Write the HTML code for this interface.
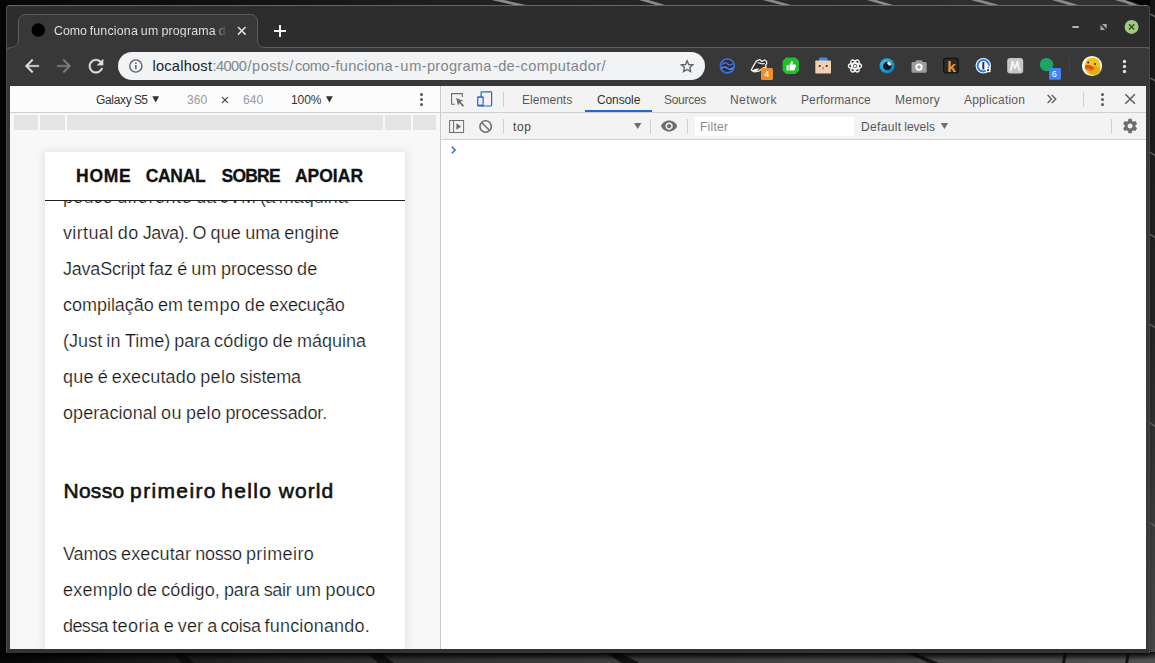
<!DOCTYPE html>
<html lang="pt-BR">
<head>
<meta charset="utf-8">
<title>Como funciona um programa de computador</title>
<style>
*{box-sizing:border-box;margin:0;padding:0}
html,body{width:1155px;height:663px;overflow:hidden}
body{position:relative;background:#060606;font-family:"Liberation Sans",sans-serif;-webkit-font-smoothing:antialiased}
.abs{position:absolute}
.t{position:absolute;white-space:nowrap;line-height:1}
/* desktop wallpaper */
#wall{left:0;top:0;width:1155px;height:663px}
/* window */
#win{left:6px;top:5px;width:1144px;height:648px;background:#393939;border-radius:4px 4px 0 0;box-shadow:0 4px 5px -1px rgba(0,0,0,.55)}
#winborder{left:6px;top:5px;width:1144px;height:648px;border:1px solid #474747;border-top-color:#676767;border-left-color:#4b4b4b;border-bottom-color:#333;border-radius:4px 4px 0 0}
#titlebar{left:7px;top:6px;width:1142px;height:42px;background:#2d2d2d;border-radius:3px 3px 0 0}
#toolbar{left:10px;top:48px;width:1136px;height:38px;background:#383838}
#content{left:10px;top:86px;width:1136px;height:563px;background:#fff;overflow:hidden}
#omni{left:118px;top:52px;width:587px;height:28px;border-radius:14px;background:#f1f3f4}
/* device side */
#devbg{left:0;top:0;width:430px;height:563px;background:#f8f8f8}
#devbar{left:0;top:0;width:430px;height:27px;background:#fcfcfc;border-bottom:1px solid #cfcfcf}
.mq{position:absolute;top:28.500px;height:15.800px;background:#e4e4e4}
#phone{left:35px;top:66px;width:360px;height:497px;background:#fff;box-shadow:0 0 9px 1px rgba(0,0,0,.10);overflow:hidden}
#nav{left:0;top:0;width:360px;height:49px;background:#fff;border-bottom:1px solid #222}
.nv{font-weight:bold;font-size:17.5px;color:#111;top:15.500px;-webkit-text-stroke:.3px #111}
.p{font-size:18px;color:#141414;left:18px;-webkit-text-stroke:.24px #fff}
.h{font-size:21px;font-weight:normal;color:#111;-webkit-text-stroke:.6px #111}
.h .t,.nv .t{top:0}
/* devtools side */
#dt{left:430px;top:0;width:706px;height:563px;background:#fff;border-left:1px solid #cbcbcb}
#dttabs{left:0;top:0;width:705px;height:27px;background:#f3f3f3;border-bottom:1px solid #cfcfcf}
#dtbar{left:0;top:27px;width:705px;height:27px;background:#f3f3f3;border-bottom:1px solid #cfcfcf}
.tab{font-size:12px;color:#5a5a5a;top:8px}
.sep{position:absolute;width:1px;background:#cfcfcf}
#url .t{top:0}
#url .t:first-child{color:#202124}
</style>
</head>
<body>
<svg id="wall" class="abs" viewBox="0 0 1155 663">
  <defs>
    <linearGradient id="gtop" x1="0" x2="1" y1="0" y2="0"><stop offset="0" stop-color="#060606"/><stop offset=".2" stop-color="#111"/><stop offset=".4" stop-color="#202020"/><stop offset=".75" stop-color="#2b2b2b"/><stop offset="1" stop-color="#333"/></linearGradient>
    <linearGradient id="gbot" x1="0" x2="1" y1="0" y2="0"><stop offset="0" stop-color="#060606"/><stop offset=".13" stop-color="#1a1a1a"/><stop offset=".26" stop-color="#2b2b2b"/><stop offset=".52" stop-color="#3d3d3d"/><stop offset=".78" stop-color="#484848"/><stop offset="1" stop-color="#525252"/></linearGradient>
    <linearGradient id="gsh" x1="0" x2="0" y1="0" y2="1"><stop offset="0" stop-color="#000" stop-opacity=".8"/><stop offset="1" stop-color="#000" stop-opacity="0"/></linearGradient>
    <linearGradient id="grt" x1="0" x2="0" y1="0" y2="1"><stop offset="0" stop-color="#161616"/><stop offset=".5" stop-color="#262626"/><stop offset="1" stop-color="#4a4a4a"/></linearGradient>
  </defs>
  <rect width="1155" height="663" fill="#050505"/>
  <rect x="0" y="0" width="1155" height="6" fill="url(#gtop)"/>
  <g stroke="#8a8a8a" stroke-width="2.800" fill="none">
    <path d="M493 -1 l36 8"/><path d="M640 -1 l24 7"/><path d="M764 -1 l26 7"/><path d="M868 -1 l24 7"/><path d="M972 -1 l26 7"/><path d="M1053 -1 l24 7"/><path d="M1116 -1 q22 5 42 20"/>
  </g>
  <path d="M1122 -1 q22 5 36 16 V-1z" fill="#050505"/>
  <rect x="1150" y="0" width="5" height="663" fill="url(#grt)"/>
  <g stroke="#5d5d5d" stroke-width="1.600" fill="none">
    <path d="M1146 12 l10 5"/><path d="M1146 76 l10 5"/><path d="M1146 150 l10 6"/><path d="M1146 232 l10 6"/><path d="M1146 322 l10 6"/><path d="M1146 420 l10 7"/><path d="M1146 520 l10 7"/>
  </g>
  <rect x="0" y="652" width="1155" height="11" fill="url(#gbot)"/>
  <g fill="#0c0c0c" opacity=".85">
    <path d="M172 652 l10 0 l12 11 l-12 0z"/><path d="M366 652 l14 0 l14 11 l-16 0z"/><path d="M604 652 l14 0 l22 11 l-18 0z"/><path d="M905 652 l8 0 l26 11 l-10 0z"/>
    <path d="M1064 652 h3 l-2 11 h-3z"/><path d="M1127 652 h3 l-2 11 h-3z"/>
  </g>
  <rect x="0" y="652" width="1155" height="8" fill="url(#gsh)"/>
</svg>
<div id="win" class="abs"></div>
<div id="titlebar" class="abs"></div>
<!-- tab strip -->
<svg class="abs" style="left:6px;top:5px" width="1144" height="44" viewBox="6 5 1144 44">
  <path d="M7 49 V48 H10 L10.500 47.500 C15.500 47.500 18.500 45 18.500 40 V22 C18.500 17 21.500 14.500 26 14.500 H250 C254.5 14.5 257.5 17 257.5 22 V40 C257.5 45 260 47.5 265 47.5 H1149 V49 Z" fill="#383838" stroke="#5c5c5c" stroke-width="1"/>
  <circle cx="38.3" cy="30" r="6.8" fill="#000"/>
  <path d="M238 27 l7.6 7.6 M245.6 27 l-7.6 7.6" stroke="#dcdcdc" stroke-width="1.6" fill="none"/>
  <path d="M274 31 h12 M280 25 v12" stroke="#f2f2f2" stroke-width="2" fill="none"/>
  <!-- window controls -->
  <rect x="1072.400" y="26" width="6.400" height="2" fill="#b4b4b4"/>
  <path d="M1101.900 23.900 h4.800 v4.800 z M1100.400 25.100 v4.800 h4.800 z" fill="#a6a6a6"/>
  <circle cx="1131.600" cy="26.900" r="7" fill="#a3c982"/>
  <path d="M1129 24.300 l5.200 5.200 M1134.200 24.300 l-5.200 5.200" stroke="#2f5a1d" stroke-width="1.500" fill="none"/>
</svg>
<div class="t" id="tabtitle" style="left:54px;top:25px;width:175px;overflow:hidden;-webkit-mask-image:linear-gradient(90deg,#000 160px,transparent 173px);mask-image:linear-gradient(90deg,#000 160px,transparent 173px);font-size:12.400px;color:#dedede"><span style="word-spacing:-0.605px"><span style="letter-spacing:-0.070px">Como</span> <span style="letter-spacing:0.186px">funciona</span> <span style="letter-spacing:0.278px">um</span> <span style="letter-spacing:0.174px">programa</span> <span style="letter-spacing:0.153px">de</span> <span style="letter-spacing:0.296px">computador</span></span></div>
<div id="toolbar" class="abs"></div>
<div id="omni" class="abs"></div>
<div class="abs" id="url" style="left:152px;top:59.200px;width:460px;height:16px;line-height:1;font-size:14.600px;color:#80868b"><span class="t" style="left:0.50px;letter-spacing:0.232px">localhost</span><span class="t" style="left:60.40px;letter-spacing:-0.526px">:4000</span><span class="t" style="left:95.60px;letter-spacing:0.461px">/posts/</span><span class="t" style="left:143.10px;letter-spacing:-0.390px">como</span><span class="t" style="left:178.40px;letter-spacing:0.260px">-funciona</span><span class="t" style="left:242.30px;letter-spacing:1.012px">-um</span><span class="t" style="left:269.80px;letter-spacing:0.287px">-programa</span><span class="t" style="left:341.20px;letter-spacing:0.112px">-de</span><span class="t" style="left:363.30px;letter-spacing:0.389px">-computador/</span></div>
<svg id="tbicons" class="abs" style="left:10px;top:48px" width="1136" height="38" viewBox="10 48 1136 38">
  <!-- back / forward / reload (material, 24 grid scaled) -->
  <g transform="translate(32 66) scale(.865) translate(-12 -12)" fill="#dedede" stroke="#dedede" stroke-width=".35"><path d="M20 11H7.83l5.59-5.59L12 4l-8 8 8 8 1.41-1.41L7.83 13H20v-2z"/></g>
  <g transform="translate(64 66) scale(.865) translate(-12 -12)" fill="#7d7d7d" stroke="#7d7d7d" stroke-width=".35"><path d="M12 4l-1.41 1.41L16.17 11H4v2h12.17l-5.58 5.59L12 20l8-8z"/></g>
  <g transform="translate(96 66.2) scale(.9) translate(-12 -12)" fill="#dedede" stroke="#dedede" stroke-width=".3"><path d="M17.65 6.35C16.2 4.9 14.21 4 12 4c-4.42 0-7.99 3.58-7.99 8s3.57 8 7.99 8c3.73 0 6.840-2.550 7.730-6h-2.080c-.82 2.33-3.04 4-5.650 4-3.310 0-6-2.690-6-6s2.690-6 6-6c1.660 0 3.140.69 4.220 1.780L13 11h7V4l-2.350 2.350z"/></g>
  <!-- info -->
  <circle cx="135.8" cy="66" r="6.1" fill="none" stroke="#5f6368" stroke-width="1.4"/>
  <rect x="135.1" y="65" width="1.5" height="4.3" fill="#5f6368"/><rect x="135.1" y="62.5" width="1.5" height="1.5" fill="#5f6368"/>
  <!-- star -->
  <path transform="translate(687.100 66.300) scale(.92) translate(-687 -66.300)" d="M687 60.200 l1.750 4.150 4.500.380 -3.420 2.960 1.030 4.400 -3.860-2.330 -3.860 2.330 1.030-4.400 -3.420-2.960 4.500-.380z" fill="none" stroke="#5f6368" stroke-width="1.450" stroke-linejoin="miter"/>
  <!-- ext1 blue wave circle -->
  <circle cx="727.300" cy="65.900" r="6.900" fill="#2b2e3d" stroke="#3f6fdc" stroke-width="1.700"/>
  <path d="M722 64.800 q2.600-3.600 5.300-1 t5.300-.2" fill="none" stroke="#4a78e0" stroke-width="1.300"/>
  <path d="M721.200 68.600 q3-3 6.100-.4 t6.100-.6" fill="none" stroke="#5d8af0" stroke-width="1.500"/>
  <!-- ext2 pen with orange badge -->
  <path d="M751.300 70.200 l1.600-3.400 3.600-6 3.200-1.200 2.200 1.800 2.800-1.400 1.800 1.200 .2 2.600 -1.200 1.400 .8 2 -3.400 .8 -4.200 3.200 -4.200 .6z" fill="#30302e" stroke="#f3efe6" stroke-width="1.300" stroke-linejoin="round"/>
  <path d="M751.800 70.400 l3.800-1.600 4-.2 -2.800 2.400 -4 .4z" fill="#f6f2ea"/>
  <path d="M757.500 62.500 l4.600 1.400 2.600-.4" fill="none" stroke="#f3efe6" stroke-width="1.100"/>
  <rect x="761" y="68" width="12" height="12" rx="1.500" fill="#e8912d"/>
  <!-- ext3 green octagon thumbs-up -->
  <path d="M786 57.600 h9.600 l3.400 3.400 v9.600 l-3.400 3.400 h-9.600 l-3.400-3.400 v-9.600z" fill="#1fc02a"/>
  <path d="M786.6 65.200 h2 v5.300 h-2z M789.400 65.200 l2.200-4.200 c1.100 0 1.500.8 1.200 1.900 l-.5 1.700 h2.700 c.8 0 1.100.6.900 1.300 l-1.100 3.700 c-.2.600-.6.900-1.200.9 h-4.200z" fill="#fff"/>
  <!-- ext4 box face -->
  <rect x="819" y="57.500" width="8.400" height="3.600" rx="1" fill="#3b8fe0"/>
  <rect x="815.300" y="60.400" width="15.700" height="13.200" rx=".8" fill="#f1cfb2"/>
  <circle cx="819.700" cy="66" r="1" fill="#222"/><circle cx="826.700" cy="66" r="1" fill="#222"/><path d="M822.200 67.800 h2 l-1 1.300z" fill="#333"/>
  <!-- ext5 react -->
  <g fill="none" stroke="#f4f4f4" stroke-width="1.400"><ellipse cx="855" cy="66" rx="6.600" ry="2.700"/><ellipse cx="855" cy="66" rx="6.600" ry="2.700" transform="rotate(60 855 66)"/><ellipse cx="855" cy="66" rx="6.600" ry="2.700" transform="rotate(120 855 66)"/></g>
  <circle cx="855" cy="66" r="1.500" fill="#f4f4f4"/>
  <!-- ext6 blue eye -->
  <defs><radialGradient id="eyeg" cx=".38" cy=".36" r=".75"><stop offset="0" stop-color="#4fc3ee"/><stop offset=".6" stop-color="#1b9dd4"/><stop offset="1" stop-color="#0b6a99"/></radialGradient></defs>
  <circle cx="887.100" cy="65.800" r="7.600" fill="url(#eyeg)"/>
  <circle cx="887.300" cy="66" r="4.300" fill="#0b1a24"/>
  <path d="M887.800 61.600 a4.300 4.300 0 0 1 3.600 3.400 l-2.600.8 a2 2 0 0 0 -1.600-1.800z" fill="#eef8fd"/>
  <!-- ext7 camera -->
  <path d="M916.400 60.300 h5.400 l1.200 1.700 h2.300 a1.400 1.400 0 0 1 1.400 1.400 v8 a1.400 1.400 0 0 1 -1.400 1.400 h-12.400 a1.400 1.400 0 0 1 -1.400-1.400 v-8 a1.400 1.400 0 0 1 1.400-1.400 h2.300z" fill="#9c9c9c"/>
  <circle cx="919" cy="67.100" r="2.700" fill="none" stroke="#fff" stroke-width="1.800"/>
  <!-- ext8 k -->
  <rect x="943.700" y="58.400" width="14.500" height="14.600" rx="2.200" fill="#2a2a2a" stroke="#121212" stroke-width="1.200"/>
  <!-- ext9 1password -->
  <circle cx="983.300" cy="65.700" r="7.700" fill="#f7f9fc"/>
  <circle cx="983.300" cy="65.700" r="5.700" fill="none" stroke="#2a7de1" stroke-width="2"/>
  <rect x="982.400" y="62" width="1.900" height="7.400" rx=".6" fill="#2b2b33"/>
  <rect x="985.600" y="68" width="5" height="4.300" rx="1" fill="#fff"/><circle cx="988.100" cy="70.200" r="1.100" fill="#333"/>
  <path d="M986.600 68.200 v-1 a1.500 1.500 0 0 1 3 0 v1" fill="none" stroke="#fff" stroke-width="1"/>
  <!-- ext10 M -->
  <rect x="1007.200" y="58" width="16" height="15.600" rx="3" fill="#c6c6c6"/>
  <path d="M1010.800 70.300 l1.700-8.800 2.500 6.600 2.600-6.600 c.6 3 .3 6 2 8.800" fill="none" stroke="#f3f3f3" stroke-width="1.900" stroke-linejoin="round" stroke-linecap="round"/>
  <!-- ext11 green dot + blue badge -->
  <circle cx="1046.500" cy="64.600" r="6.700" fill="#1fa463"/>
  <rect x="1049" y="68" width="12" height="11.700" rx="1.500" fill="#4285f4"/>
  <!-- separator -->
  <rect x="1069" y="58" width="1" height="17" fill="#434343"/>
  <!-- avatar duck -->
  <circle cx="1092" cy="66" r="10.100" fill="#fbfbf6"/>
  <ellipse cx="1092.600" cy="66.300" rx="8" ry="8.800" fill="#f3c51c"/>
  <ellipse cx="1094.500" cy="70.500" rx="6" ry="4.500" fill="#d9a413" opacity=".75"/>
  <ellipse cx="1089.300" cy="67.600" rx="4.600" ry="2.500" fill="#ea4a16" transform="rotate(14 1089.300 67.600)"/>
  <ellipse cx="1089.600" cy="69.300" rx="3.300" ry="1.200" fill="#f36b2a" transform="rotate(14 1089.600 69.300)"/>
  <circle cx="1088.200" cy="62.400" r=".9" fill="#111"/><circle cx="1095" cy="64" r=".9" fill="#111"/>
  <!-- menu dots -->
  <circle cx="1124.500" cy="61.500" r="1.700" fill="#dedede"/><circle cx="1124.500" cy="66.500" r="1.700" fill="#dedede"/><circle cx="1124.500" cy="71.500" r="1.700" fill="#dedede"/>
</svg>
<div class="t" style="left:764.300px;top:69.500px;font-size:9px;color:#fff">4</div>
<div class="t" style="left:1051.800px;top:69.500px;font-size:9px;color:#fff">6</div>
<div class="t" style="left:947.300px;top:58.900px;font-size:15.500px;font-weight:bold;color:#ee9a2e;letter-spacing:0">k</div>
<div id="content" class="abs">
  <div id="devbg" class="abs"></div>
  <div id="devbar" class="abs"></div>
  <div class="t" style="left:86px;top:8px;font-size:12px;color:#333"><span style="word-spacing:-0.586px"><span style="letter-spacing:-0.335px">Galaxy</span> <span style="letter-spacing:-0.811px">S5</span></span></div>
  <div class="t" style="left:177px;top:8px;font-size:12px;color:#9a9a9a"><span style="word-spacing:-0.586px"><span style="letter-spacing:0.094px">360</span></span></div>
  <div class="t" style="left:210.600px;top:5.500px;font-size:15px;color:#444">×</div>
  <div class="t" style="left:233px;top:8px;font-size:12px;color:#9a9a9a"><span style="word-spacing:-0.586px"><span style="letter-spacing:0.094px">640</span></span></div>
  <div class="t" style="left:281px;top:8px;font-size:12px;color:#333"><span style="word-spacing:-0.586px"><span style="letter-spacing:-0.074px">100%</span></span></div>
  <svg class="abs" style="left:0;top:0" width="430" height="46" viewBox="0 0 430 46">
    <path d="M142.300 10.200 h6.800 l-3.400 6.300 z M316 10.200 h6.800 l-3.400 6.300 z" fill="#333"/>
    <circle cx="411.5" cy="8.5" r="1.5" fill="#555"/><circle cx="411.5" cy="13.5" r="1.5" fill="#555"/><circle cx="411.5" cy="18.5" r="1.5" fill="#555"/>
  </svg>
  <div class="mq" style="left:4px;width:24px"></div>
  <div class="mq" style="left:30px;width:25px"></div>
  <div class="mq" style="left:57px;width:316px"></div>
  <div class="mq" style="left:375px;width:26px"></div>
  <div class="mq" style="left:403px;width:23px"></div>
  <div id="phone" class="abs">
    <div class="t p" style="top:36px"><span style="word-spacing:-0.894px"><span style="letter-spacing:0.194px">pouco</span> <span style="letter-spacing:0.559px">diferente</span> <span style="letter-spacing:-0.168px">da</span> <span style="letter-spacing:-0.094px">JVM</span> <span style="letter-spacing:-0.629px">(a</span> <span style="letter-spacing:0.005px">máquina</span></span></div>
    <div id="nav" class="abs"></div>
    <div class="abs nv" style="left:0;width:360px;height:18px"><span class="t" style="left:31.10px;letter-spacing:0.691px">HOME</span> <span class="t" style="left:100.70px;letter-spacing:-0.313px">CANAL</span> <span class="t" style="left:176.50px;letter-spacing:-0.790px">SOBRE</span> <span class="t" style="left:249.90px;letter-spacing:0.016px">APOIAR</span></div>
    <div class="t p" style="top:72px"><span style="word-spacing:-0.894px"><span style="letter-spacing:0.365px">virtual</span> <span style="letter-spacing:0.484px">do</span> <span style="letter-spacing:-0.591px">Java).</span> <span style="letter-spacing:-0.051px">O</span> <span style="letter-spacing:0.194px">que</span> <span style="letter-spacing:-0.038px">uma</span> <span style="letter-spacing:0.135px">engine</span></span></div>
    <div class="t p" style="top:108px"><span style="word-spacing:-0.894px"><span style="letter-spacing:-0.216px">JavaScript</span> <span style="letter-spacing:0.038px">faz</span> <span style="letter-spacing:-0.095px">é</span> <span style="letter-spacing:0.344px">um</span> <span style="letter-spacing:-0.154px">processo</span> <span style="letter-spacing:0.185px">de</span></span></div>
    <div class="t p" style="top:144px"><span style="word-spacing:-0.894px"><span style="letter-spacing:-0.025px">compilação</span> <span style="letter-spacing:0.190px">em</span> <span style="letter-spacing:0.658px">tempo</span> <span style="letter-spacing:0.185px">de</span> <span style="letter-spacing:-0.237px">execução</span></span></div>
    <div class="t p" style="top:180px"><span style="word-spacing:-0.894px"><span style="letter-spacing:0.044px">(Just</span> <span style="letter-spacing:0.242px">in</span> <span style="letter-spacing:-0.018px">Time)</span> <span style="letter-spacing:-0.112px">para</span> <span style="letter-spacing:0.216px">código</span> <span style="letter-spacing:0.185px">de</span> <span style="letter-spacing:0.005px">máquina</span></span></div>
    <div class="t p" style="top:216px"><span style="word-spacing:-0.894px"><span style="letter-spacing:0.194px">que</span> <span style="letter-spacing:-0.095px">é</span> <span style="letter-spacing:0.136px">executado</span> <span style="letter-spacing:0.358px">pelo</span> <span style="letter-spacing:-0.116px">sistema</span></span></div>
    <div class="t p" style="top:252px"><span style="word-spacing:-0.894px"><span style="letter-spacing:0.075px">operacional</span> <span style="letter-spacing:0.357px">ou</span> <span style="letter-spacing:0.358px">pelo</span> <span style="letter-spacing:-0.114px">processador.</span></span></div>
    <div class="abs h" style="left:0;top:327.700px;width:360px;height:22px;line-height:1"><span class="t" style="left:18.50px;letter-spacing:0.264px">Nosso</span> <span class="t" style="left:85.10px;letter-spacing:1.362px">primeiro</span> <span class="t" style="left:176.20px;letter-spacing:1.328px">hello</span> <span class="t" style="left:233.70px;letter-spacing:1.049px">world</span></div>
    <div class="t p" style="top:393px"><span style="word-spacing:-0.894px"><span style="letter-spacing:-0.150px">Vamos</span> <span style="letter-spacing:0.119px">executar</span> <span style="letter-spacing:-0.270px">nosso</span> <span style="letter-spacing:0.405px">primeiro</span></span></div>
    <div class="t p" style="top:429px"><span style="word-spacing:-0.894px"><span style="letter-spacing:0.226px">exemplo</span> <span style="letter-spacing:0.185px">de</span> <span style="letter-spacing:0.075px">código,</span> <span style="letter-spacing:-0.112px">para</span> <span style="letter-spacing:-0.285px">sair</span> <span style="letter-spacing:0.344px">um</span> <span style="letter-spacing:0.194px">pouco</span></span></div>
    <div class="t p" style="top:465px"><span style="word-spacing:-0.894px"><span style="letter-spacing:-0.603px">dessa</span> <span style="letter-spacing:0.417px">teoria</span> <span style="letter-spacing:-0.095px">e</span> <span style="letter-spacing:0.083px">ver</span> <span style="letter-spacing:-0.801px">a</span> <span style="letter-spacing:-0.410px">coisa</span> <span style="letter-spacing:0.182px">funcionando.</span></span></div>
  </div>
  <div id="dt" class="abs">
    <div id="dttabs" class="abs"></div>
    <div id="dtbar" class="abs"></div>
    <div class="abs" style="left:144px;top:24px;width:67px;height:2px;background:#1f69cc"></div>
    <div class="t tab" style="left:81px"><span style="word-spacing:-0.586px"><span style="letter-spacing:0.029px">Elements</span></span></div>
    <div class="t tab" style="left:156px;color:#333"><span style="word-spacing:-0.586px"><span style="letter-spacing:-0.116px">Console</span></span></div>
    <div class="t tab" style="left:223px"><span style="word-spacing:-0.586px"><span style="letter-spacing:-0.278px">Sources</span></span></div>
    <div class="t tab" style="left:289px"><span style="word-spacing:-0.586px"><span style="letter-spacing:0.406px">Network</span></span></div>
    <div class="t tab" style="left:360px"><span style="word-spacing:-0.586px"><span style="letter-spacing:0.099px">Performance</span></span></div>
    <div class="t tab" style="left:454px"><span style="word-spacing:-0.586px"><span style="letter-spacing:0.281px">Memory</span></span></div>
    <div class="t tab" style="left:523px"><span style="word-spacing:-0.586px"><span style="letter-spacing:0.219px">Application</span></span></div>
    <div class="abs" style="left:254px;top:31px;width:159px;height:19px;background:#fff"></div>
    <div class="t" style="left:72px;top:35px;font-size:12px;color:#444"><span style="word-spacing:-0.586px"><span style="letter-spacing:0.683px">top</span></span></div>
    <div class="t" style="left:259px;top:35px;font-size:12px;color:#8a8a8a"><span style="word-spacing:-0.586px"><span style="letter-spacing:0.262px">Filter</span></span></div>
    <div class="t" style="left:420px;top:35px;font-size:12px;color:#555"><span style="word-spacing:-0.586px"><span style="letter-spacing:0.359px">Default</span> <span style="letter-spacing:-0.017px">levels</span></span></div>
    <div class="sep" style="left:62px;top:6px;height:15px"></div>
    <div class="sep" style="left:642px;top:6px;height:15px"></div>
    <div class="sep" style="left:62px;top:33px;height:15px"></div>
    <div class="sep" style="left:209px;top:33px;height:15px"></div>
    <div class="sep" style="left:246px;top:33px;height:15px"></div>
    <div class="sep" style="left:670px;top:33px;height:15px"></div>
    <svg id="dticons" class="abs" style="left:0;top:0" width="705" height="80" viewBox="440.9 86 705 80">
  <!-- inspect -->
  <path d="M454.800 104.200 h-3.300 v-10.600 h10.700 v3.300" fill="none" stroke="#6e6e6e" stroke-width="1.100"/>
  <path d="M456 98 l7 2.700 -2.600 1.100 3.600 3.600 -1.300 1.300 -3.600-3.600 -1.100 2.600z" fill="#6e6e6e"/>
  <!-- device toggle -->
  <rect x="481" y="91.800" width="10.500" height="14.200" rx=".8" fill="none" stroke="#1f69cc" stroke-width="1.200"/>
  <rect x="477" y="96.200" width="6.600" height="10.300" rx="1" fill="#1f69cc"/>
  <rect x="478.200" y="97.800" width="4.200" height="6.800" fill="#f3f3f3"/>
  <!-- sidebar -->
  <rect x="449.500" y="120.500" width="14" height="12" fill="none" stroke="#6e6e6e" stroke-width="1"/>
  <path d="M453.500 120.500 v12" stroke="#6e6e6e" stroke-width="1"/>
  <path d="M456.300 123.300 l4.800 3.200 -4.800 3.200z" fill="#6e6e6e"/>
  <!-- clear -->
  <circle cx="485.500" cy="126.500" r="5.700" fill="none" stroke="#6e6e6e" stroke-width="1.600"/>
  <path d="M481.500 122.500 l8 8" stroke="#6e6e6e" stroke-width="1.600"/>
  <!-- dropdown arrows -->
  <path d="M633.900 123 h7.300 l-3.650 6z" fill="#6e6e6e"/>
  <path d="M940.700 123 h7.300 l-3.650 6z" fill="#6e6e6e"/>
  <!-- eye -->
  <g transform="translate(669 126.100) scale(.736) translate(-12 -12)" fill="#6e6e6e"><path d="M12 4.500C7 4.500 2.730 7.610 1 12c1.730 4.390 6 7.500 11 7.500s9.270-3.110 11-7.500c-1.730-4.390-6-7.500-11-7.500zM12 17c-2.760 0-5-2.240-5-5s2.240-5 5-5 5 2.240 5 5-2.240 5-5 5zm0-8c-1.660 0-3 1.340-3 3s1.340 3 3 3 3-1.340 3-3-1.340-3-3-3z"/></g>
  <!-- more tabs chevrons -->
  <path d="M1047.500 95 l4 4 -4 4 M1051.700 95 l4 4 -4 4" fill="none" stroke="#5a5a5a" stroke-width="1.300"/>
  <!-- dots -->
  <circle cx="1102.400" cy="94.500" r="1.500" fill="#5a5a5a"/><circle cx="1102.400" cy="99.500" r="1.500" fill="#5a5a5a"/><circle cx="1102.400" cy="104.500" r="1.500" fill="#5a5a5a"/>
  <!-- close -->
  <path d="M1125.200 94.300 l9.600 9.400 M1134.800 94.300 l-9.600 9.400" stroke="#5a5a5a" stroke-width="1.500" fill="none"/>
  <!-- gear -->
  <g transform="translate(1130 126) scale(.715) translate(-12 -12)" fill="#6e6e6e"><path d="M19.430 12.980c.04-.32.070-.64.070-.98s-.03-.66-.07-.98l2.110-1.650c.19-.15.240-.42.120-.64l-2-3.460c-.12-.22-.39-.3-.61-.22l-2.490 1c-.52-.4-1.080-.73-1.690-.98l-.38-2.650C14.460 2.180 14.250 2 14 2h-4c-.25 0-.46.180-.49.420l-.38 2.650c-.61.250-1.170.59-1.690.98l-2.490-1c-.23-.09-.49 0-.61.220l-2 3.460c-.13.220-.07.490.12.640l2.110 1.650c-.04.320-.07.650-.07.980s.03.660.07.980l-2.110 1.650c-.19.150-.24.420-.12.640l2 3.460c.12.220.39.300.61.220l2.490-1c.52.400 1.080.73 1.690.98l.38 2.650c.03.240.24.420.49.420h4c.25 0 .46-.18.490-.42l.38-2.650c.61-.25 1.170-.59 1.690-.98l2.490 1c.23.090.49 0 .61-.22l2-3.460c.12-.22.070-.49-.12-.64l-2.110-1.650zM12 15.500c-1.930 0-3.500-1.570-3.500-3.500s1.570-3.500 3.500-3.500 3.500 1.570 3.500 3.500-1.570 3.500-3.500 3.500z"/></g>
  <!-- console prompt -->
  <path d="M451.700 146.800 l3.300 3.200 -3.300 3.200" fill="none" stroke="#2f6ad6" stroke-width="1.500"/>
</svg>
  </div>
</div>
<div class="abs" style="left:7px;top:649px;width:1142px;height:3px;background:#323232"></div>
<div id="winborder" class="abs"></div>
</body>
</html>
